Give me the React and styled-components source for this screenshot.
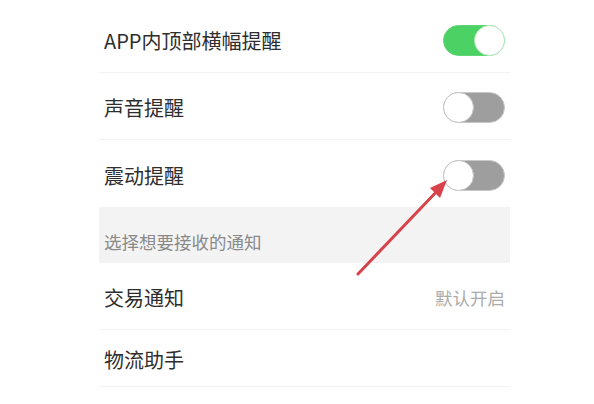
import React from 'react';
import styled, { createGlobalStyle } from 'styled-components';

const GlobalStyle = createGlobalStyle`
  html, body {
    margin: 0;
    padding: 0;
    background: #ffffff;
  }
  body {
    font-family: "Noto Sans CJK SC", "Noto Sans", sans-serif;
  }
`;

const Switch = ({ on = false }) => (
  <Track on={on}>
    <Knob on={on} />
  </Track>
);

const App = () => (
  <>
    <GlobalStyle />
    <Page>
      <List>
        <Row>
          <Title>APP内顶部横幅提醒</Title>
          <Switch on />
        </Row>
        <Row>
          <Title>声音提醒</Title>
          <Switch />
        </Row>
        <Row last>
          <Title>震动提醒</Title>
          <Switch />
        </Row>
        <SectionHeader>选择想要接收的通知</SectionHeader>
        <Row>
          <Title>交易通知</Title>
          <Value>默认开启</Value>
        </Row>
        <Row short>
          <Title>物流助手</Title>
        </Row>
      </List>
      <Arrow viewBox="0 0 110 110" width="110" height="110">
        <line x1="14" y1="104" x2="96" y2="18" stroke="#d8434b" strokeWidth="3" strokeLinecap="round" />
        <polygon points="103,10 86,18 96,28" fill="#d8434b" />
      </Arrow>
    </Page>
  </>
);

const Page = styled.div`
  position: relative;
  width: 594px;
  height: 404px;
  overflow: hidden;
  padding: 6px 0 0 99px;
  box-sizing: border-box;
`;

const List = styled.div`
  width: 411px;
  display: flex;
  flex-direction: column;
`;

const Row = styled.div`
  display: flex;
  align-items: center;
  justify-content: space-between;
  height: ${(props) => (props.short ? '57px' : '67px')};
  padding: 3px 5px 0 5px;
  box-sizing: border-box;
  border-bottom: ${(props) => (props.last ? 'none' : '1px solid #f2f2f2')};
`;

const Title = styled.span`
  font-size: 20px;
  color: #2e2e2e;
`;

const Value = styled.span`
  font-size: 17.5px;
  color: #ababab;
`;

const SectionHeader = styled.div`
  height: 56px;
  padding: 13px 5px 0 5px;
  display: flex;
  align-items: center;
  box-sizing: border-box;
  background: #f3f3f3;
  font-size: 17.5px;
  color: #8a8a8a;
`;

const Track = styled.div`
  position: relative;
  width: 62px;
  height: 31px;
  border-radius: 16px;
  box-sizing: border-box;
  background: ${(props) => (props.on ? '#4cd264' : '#9e9e9e')};
  border: ${(props) => (props.on ? '1px solid #5ed674' : '1px solid #c8c8c8')};
`;

const Knob = styled.div`
  position: absolute;
  top: -1px;
  left: ${(props) => (props.on ? '30px' : '-1px')};
  width: 31px;
  height: 31px;
  border-radius: 50%;
  box-sizing: border-box;
  background: #ffffff;
  border: 1.5px solid ${(props) => (props.on ? '#b7e6c0' : '#c4c4c4')};
`;

const Arrow = styled.svg`
  position: absolute;
  left: 344px;
  top: 170px;
`;

export default App;
